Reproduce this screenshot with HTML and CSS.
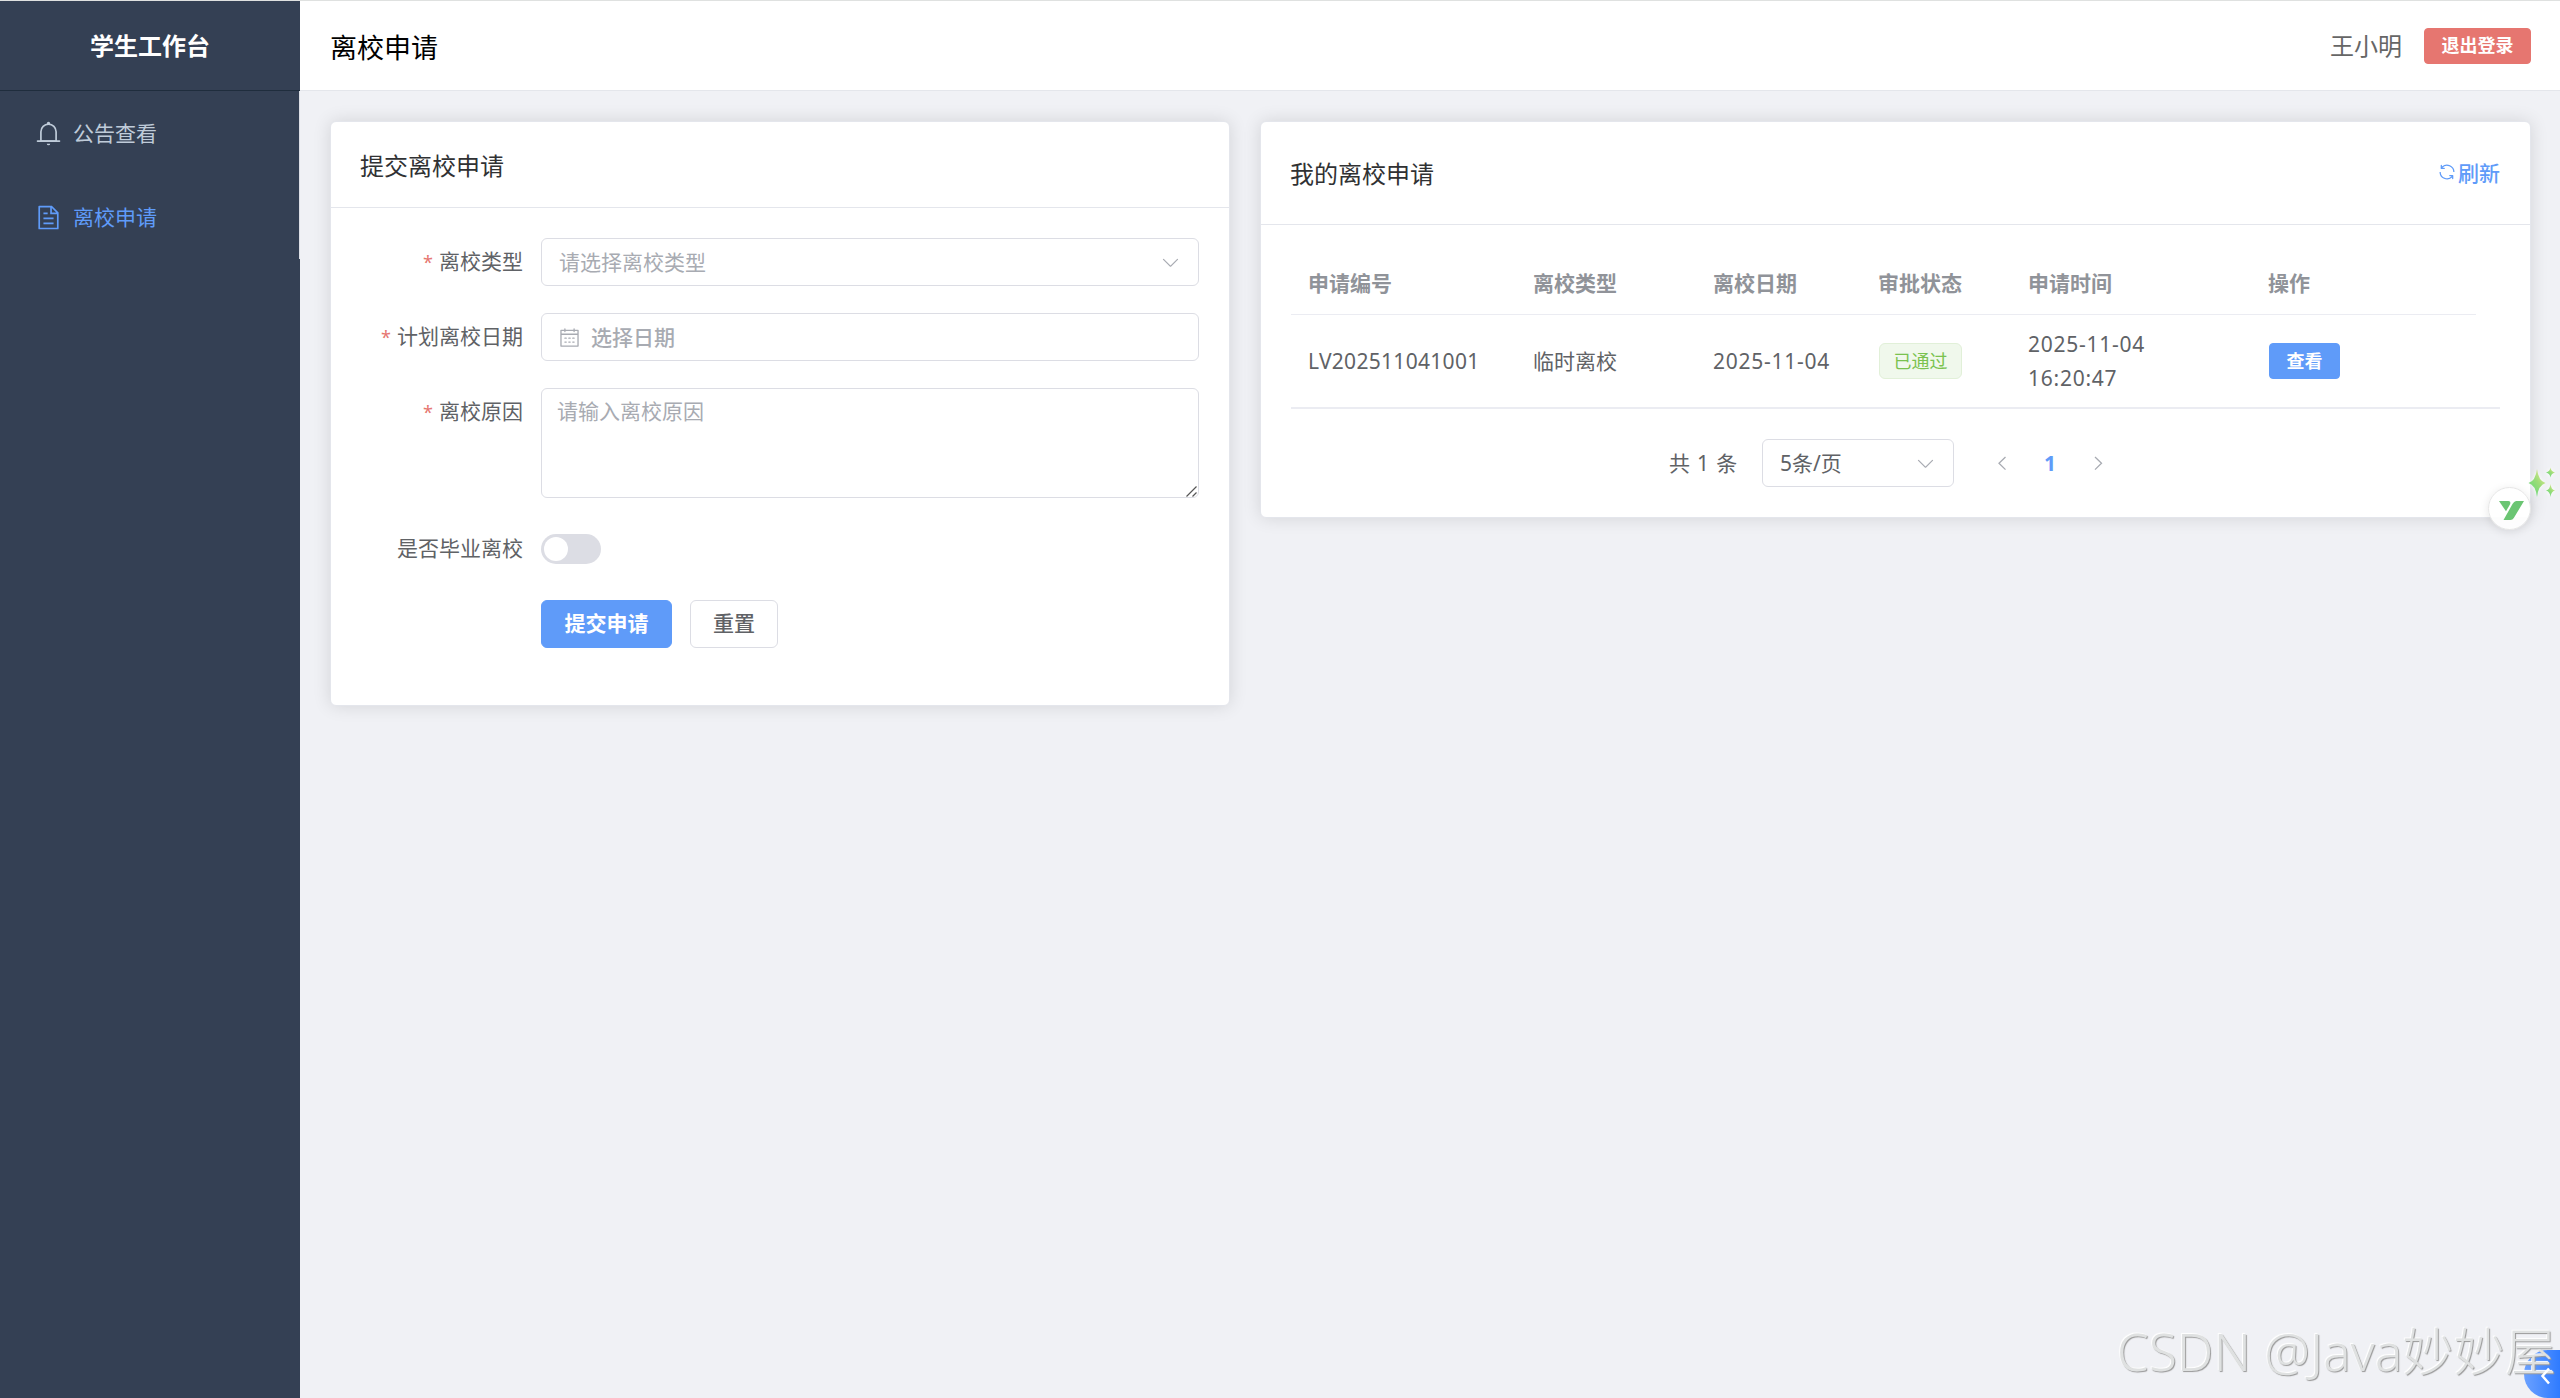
FILE: index.html
```html
<!DOCTYPE html>
<html lang="zh-CN">

<head>
    <meta charset="UTF-8">
    <title>学生工作台</title>
    <link rel="stylesheet" href="styles.css">
</head>

<body>
    <div class="layout">
        <div class="aside">
            <div class="logo">学生工作台</div>
            <ul class="menu">
                <li>
                    <span class="menu-icon"><svg viewBox="0 0 1024 1024"><path d="M512 64a64 64 0 0 1 64 64v64H448v-64a64 64 0 0 1 64-64z"/><path d="M256 768h512V448a256 256 0 1 0-512 0v320zm256-640a320 320 0 0 1 320 320v384H192V448a320 320 0 0 1 320-320z"/><path d="M96 768h832q32 0 32 32t-32 32H96q-32 0-32-32t32-32zm352 128h128a64 64 0 0 1-128 0z"/></svg></span>
                    <span class="menu-text">公告查看</span>
                </li>
                <li class="active">
                    <span class="menu-icon"><svg viewBox="0 0 1024 1024"><path d="M832 384H576V128H192v768h640V384zm-26.496-64L640 154.496V320h165.504zM160 64h480l256 256v608a32 32 0 0 1-32 32H160a32 32 0 0 1-32-32V96a32 32 0 0 1 32-32zm160 448h384v64H320v-64zm0-192h160v64H320v-64zm0 384h384v64H320v-64z"/></svg></span>
                    <span class="menu-text">离校申请</span>
                </li>
            </ul>
        </div>
        <div class="container">
            <div class="header">
                <div class="title">离校申请</div>
                <div class="user">
                    <span class="name">王小明</span>
                    <button class="btn btn-danger btn-small">退出登录</button>
                </div>
            </div>
            <div class="main">
                <!-- 提交表单 -->
                <div class="card form-card">
                    <div class="card-header">提交离校申请</div>
                    <form class="form">
                        <div class="form-item">
                            <label class="required">离校类型</label>
                            <div class="input select">
                                <span class="placeholder">请选择离校类型</span>
                                <svg class="icon" viewBox="0 0 1024 1024"><path d="M831.872 340.864 512 652.672 192.128 340.864a30.592 30.592 0 0 0-42.752 0 29.12 29.12 0 0 0 0 41.6L489.664 714.24a32 32 0 0 0 44.672 0l340.288-331.712a29.12 29.12 0 0 0 0-41.728 30.592 30.592 0 0 0-42.752 0z"/></svg>
                            </div>
                        </div>
                        <div class="form-item">
                            <label class="required">计划离校日期</label>
                            <div class="input date">
                                <svg class="icon" viewBox="0 0 1024 1024"><path d="M128 384v512h768V192H768v32a32 32 0 1 1-64 0v-32H320v32a32 32 0 0 1-64 0v-32H128v128h768v64H128zm192-256h384V96a32 32 0 1 1 64 0v32h160a32 32 0 0 1 32 32v768a32 32 0 0 1-32 32H96a32 32 0 0 1-32-32V160a32 32 0 0 1 32-32h160V96a32 32 0 0 1 64 0v32zm-32 384h64a32 32 0 0 1 0 64h-64a32 32 0 0 1 0-64zm0 192h64a32 32 0 1 1 0 64h-64a32 32 0 1 1 0-64zm192-192h64a32 32 0 0 1 0 64h-64a32 32 0 0 1 0-64zm0 192h64a32 32 0 1 1 0 64h-64a32 32 0 1 1 0-64zm192-192h64a32 32 0 1 1 0 64h-64a32 32 0 1 1 0-64zm0 192h64a32 32 0 1 1 0 64h-64a32 32 0 1 1 0-64z"/></svg>
                                <span class="placeholder">选择日期</span>
                            </div>
                        </div>
                        <div class="form-item">
                            <label class="required">离校原因</label>
                            <div class="textarea-box">
                                <textarea class="textarea" placeholder="请输入离校原因"></textarea>
                                <svg class="grip" viewBox="0 0 11 11"><path d="M0.5 10.5L10.5 0.5M6.5 10.5L10.5 6.5"/></svg>
                            </div>
                        </div>
                        <div class="form-item switch-item">
                            <label>是否毕业离校</label>
                            <span class="switch"></span>
                        </div>
                        <div class="form-item form-buttons">
                            <button type="button" class="btn btn-primary">提交申请</button>
                            <button type="button" class="btn">重置</button>
                        </div>
                    </form>
                </div>

                <!-- 申请列表 -->
                <div class="card list-card">
                    <div class="card-header">
                        <span>我的离校申请</span>
                        <a class="refresh"><svg viewBox="0 0 1024 1024"><path d="M771.776 794.88A384 384 0 0 1 128 512h64a320 320 0 0 0 555.712 216.448H654.72a32 32 0 1 1 0-64h149.056a32 32 0 0 1 32 32v148.928a32 32 0 1 1-64 0v-50.56zM276.288 295.616h92.992a32 32 0 0 1 0 64H220.16a32 32 0 0 1-32-32V178.56a32 32 0 0 1 64 0v50.56A384 384 0 0 1 896.128 512h-64a320 320 0 0 0-555.776-216.384z"/></svg>刷新</a>
                    </div>
                    <div class="table-wrap">
                        <table class="table">
                            <colgroup>
                                <col class="col-no">
                                <col class="col-type">
                                <col class="col-date">
                                <col class="col-status">
                                <col class="col-time">
                                <col class="col-action">
                            </colgroup>
                            <thead>
                                <tr>
                                    <th>申请编号</th>
                                    <th>离校类型</th>
                                    <th>离校日期</th>
                                    <th>审批状态</th>
                                    <th>申请时间</th>
                                    <th>操作</th>
                                </tr>
                            </thead>
                            <tbody>
                                <tr>
                                    <td class="no">LV202511041001</td>
                                    <td>临时离校</td>
                                    <td class="num">2025-11-04</td>
                                    <td><span class="tag">已通过</span></td>
                                    <td class="num">2025-11-04<br>16:20:47</td>
                                    <td><button class="btn btn-primary btn-small">查看</button></td>
                                </tr>
                            </tbody>
                        </table>
                    </div>
                    <div class="pagination">
                        <span class="total">共 1 条</span>
                        <div class="input select page-size">
                            <span>5条/页</span>
                            <svg class="icon" viewBox="0 0 1024 1024"><path d="M831.872 340.864 512 652.672 192.128 340.864a30.592 30.592 0 0 0-42.752 0 29.12 29.12 0 0 0 0 41.6L489.664 714.24a32 32 0 0 0 44.672 0l340.288-331.712a29.12 29.12 0 0 0 0-41.728 30.592 30.592 0 0 0-42.752 0z"/></svg>
                        </div>
                        <div class="pager">
                            <span><svg viewBox="0 0 18 18"><path d="M12.5 3L6 9.3L12.5 15.6"/></svg></span>
                            <span class="on">1</span>
                            <span><svg viewBox="0 0 18 18"><path d="M6 3L12.5 9.3L6 15.6"/></svg></span>
                        </div>
                    </div>
                </div>
            </div>
        </div>
    </div>

    <!-- 右侧悬浮 -->
    <div class="float-ball">
        <svg viewBox="0 0 25 19"><path d="M0 0H9.5Q12 .3 11.2 3L7 10.3Z"/><path d="M17 0H25L14.8 17Q13.6 19 11.5 19H4.5L13.5 3Q15 .3 17 0Z"/></svg>
    </div>
    <svg class="sparkles" viewBox="0 0 30 34">
        <defs>
            <linearGradient id="spark" x1="1" y1="0" x2="0.2" y2="1">
                <stop offset="0" stop-color="#fbe9a0"/>
                <stop offset="0.5" stop-color="#9ddd78"/>
                <stop offset="1" stop-color="#62d67c"/>
            </linearGradient>
        </defs>
        <path d="M9 3Q10.500 15 17.500 17Q10.500 19 9 31Q7.500 19 .5 17Q7.500 15 9 3Z"/>
        <path d="M22.500 1.500Q23 5.500 27 6.500Q23 7.500 22.500 11.500Q22 7.500 18 6.500Q22 5.500 22.500 1.500Z"/>
        <path d="M22.500 18Q23 23.500 27 24.500Q23 25.500 22.500 31Q22 25.500 18 24.500Q22 23.500 22.500 18Z"/>
    </svg>
    <div class="side-tab"></div>
    <div class="watermark">CSDN @Java妙妙屋</div>
    <svg class="side-arrow" viewBox="0 0 12 18"><path d="M9 1.500L2.500 9L9 16.500"/></svg>
</body>

</html>
```
FILE: styles.css
```css
* {
    margin: 0;
    padding: 0;
    box-sizing: border-box;
}

html {
    height: 1398px;
    overflow: hidden;
}

body {
    position: relative;
    height: 1398px;
    font-family: "Noto Sans", "Noto Sans CJK SC", sans-serif;
    font-size: 21px;
    color: #606266;
    background-color: #f0f1f5;
    overflow: hidden;
}

svg {
    display: block;
    fill: currentColor;
}

.layout {
    display: flex;
    height: 1398px;
    border-top: 1px solid #dfe1e0;
}

/* 侧边栏 */
.aside {
    width: 300px;
    background-color: #344054;
}

.logo {
    height: 90px;
    line-height: 90px;
    border-bottom: 1px solid #1f2d3d;
    text-align: center;
    font-size: 24px;
    font-weight: bold;
    color: #fff;
}

.menu {
    list-style: none;
    border-right: 1px solid #dcdfe6;
}

.menu li {
    display: flex;
    align-items: center;
    height: 84px;
    padding-left: 30px;
    color: #bfcbd9;
}

.menu .active {
    color: #5f9bf9;
}

.menu-icon {
    width: 36px;
    margin-right: 7px;
}

.menu-icon svg {
    width: 27px;
    height: 27px;
    margin: 0 auto;
}

.menu-text {
    padding-bottom: 2px;
}

/* 顶部 */
.container {
    flex: 1;
}

.header {
    display: flex;
    justify-content: space-between;
    align-items: center;
    height: 90px;
    padding: 0 29px 0 30px;
    background-color: #fff;
    border-bottom: 1px solid #e4e6eb;
}

.title {
    font-size: 27px;
    line-height: 40px;
    padding-top: 4px;
    color: #000;
}

.user {
    display: flex;
    align-items: center;
    gap: 22px;
}

.name {
    padding-top: 1px;
    font-size: 24px;
    line-height: 36px;
    color: #666;
}

/* 按钮 */
.btn {
    height: 48px;
    padding: 0 22px 2px;
    border: 1px solid #dcdde4;
    border-radius: 6px;
    background-color: #fff;
    color: #606266;
    font-family: inherit;
    font-size: 21px;
    font-weight: 500;
    line-height: 30px;
}

.btn-primary {
    padding: 0 22.5px 2px;
    border-color: #5f9bf9;
    background-color: #5f9bf9;
    color: #fff;
    font-weight: bold;
}

.btn-danger {
    border-color: #e67670;
    background-color: #e67670;
    color: #fff;
    font-weight: bold;
}

.btn-small {
    display: block;
    height: 36px;
    padding: 0 16.5px 1px;
    border-radius: 4px;
    font-size: 18px;
}

.main {
    display: flex;
    align-items: flex-start;
    gap: 30px;
    padding: 30px 29px 30px 30px;
}

.card {
    border: 1px solid #e4e6ec;
    border-radius: 6px;
    background-color: #fff;
    box-shadow: 0 0 18px rgba(0, 0, 0, 0.12);
}

.form-card {
    width: 900px;
    height: 585px;
}

.list-card {
    flex: 1;
    height: 397px;
}

.card-header {
    display: flex;
    justify-content: space-between;
    align-items: center;
    height: 86px;
    padding: 0 30px 1px 29px;
    border-bottom: 1px solid #e4e6ec;
    font-size: 24px;
    color: #303133;
}

.list-card .card-header {
    height: 103px;
}

.refresh {
    display: flex;
    align-items: center;
    gap: 1px;
    padding-bottom: 2px;
    font-size: 21px;
    font-weight: 500;
    color: #5f9bf9;
}

.refresh svg {
    width: 20px;
    height: 20px;
}

/* 表单 */
.form {
    display: flex;
    flex-direction: column;
    gap: 27px;
    padding: 30px;
}

.form-item {
    display: flex;
}

.form-item label {
    width: 180px;
    height: 48px;
    padding-right: 18px;
    line-height: 46px;
    text-align: right;
}

.required::before {
    content: "*";
    margin-right: 6px;
    color: #e67670;
    font-size: 18px;
}

.input {
    display: flex;
    flex: 1;
    align-items: center;
    height: 48px;
    padding: 0 17px;
    border: 1px solid #dcdde4;
    border-radius: 6px;
    background-color: #fff;
}

.input span {
    padding-bottom: 2px;
}

.select {
    justify-content: space-between;
}

.date {
    gap: 11px;
}

.icon {
    width: 21px;
    height: 21px;
    color: #a8abb2;
}

.placeholder {
    color: #a8abb2;
}

.date .placeholder {
    font-weight: 500;
}

.textarea-box {
    position: relative;
    flex: 1;
    height: 110px;
}

.textarea {
    display: block;
    width: 100%;
    height: 110px;
    padding: 6px 15px;
    border: 1px solid #dcdde4;
    border-radius: 6px;
    font-family: inherit;
    font-size: 21px;
    line-height: 32px;
    resize: none;
}

.textarea::placeholder {
    color: #a8abb2;
}

.grip {
    position: absolute;
    right: 2px;
    bottom: 1px;
    width: 11px;
    height: 11px;
    fill: none;
    stroke: #555;
    stroke-width: 1.2;
}

.switch-item {
    align-items: center;
    height: 48px;
}

.switch {
    width: 60px;
    height: 30px;
    padding: 3px;
    border-radius: 15px;
    background-color: #dcdde4;
}

.switch::before {
    content: "";
    display: block;
    width: 24px;
    height: 24px;
    border-radius: 50%;
    background-color: #fff;
}

.form-buttons {
    gap: 18px;
    padding-left: 180px;
}

/* 表格 */
.table-wrap {
    height: 154px;
    margin: 30px 30px 0 30px;
    border-bottom: 1px solid #ebecf2;
    box-shadow: inset 0 -1px #ebecf2;
}

.table {
    width: 1185px;
    table-layout: fixed;
    border-collapse: separate;
    border-spacing: 0;
    line-height: 34px;
}

.col-no { width: 225px; }
.col-type { width: 180px; }
.col-date { width: 165px; }
.col-status { width: 150px; }
.col-time { width: 240px; }
.col-action { width: 225px; }

.table th,
.table td {
    padding: 0 18px 0 17px;
    text-align: left;
    white-space: nowrap;
}

.table th {
    height: 60px;
    padding-bottom: 3px;
    border-bottom: 1px solid #ebecf2;
    color: #909399;
}

.table td {
    height: 92px;
}

.no {
    letter-spacing: 0.3px;
}

.num {
    letter-spacing: 0.75px;
}

.tag {
    display: block;
    width: 83px;
    height: 36px;
    margin-left: 1px;
    border: 1px solid #e1f0d8;
    border-radius: 6px;
    background-color: #f0f8ec;
    color: #7ac24f;
    font-size: 18px;
    line-height: 34px;
    text-align: center;
}

.table .btn {
    margin-left: 1px;
}

/* 分页 */
.pagination {
    display: flex;
    align-items: center;
    justify-content: center;
    height: 48px;
    margin-top: 30px;
}

.total {
    padding-bottom: 2px;
    letter-spacing: 0.8px;
}

.page-size {
    flex: none;
    width: 192px;
    margin: 0 24px;
}

.pager {
    display: flex;
}

.pager span {
    display: flex;
    align-items: center;
    justify-content: center;
    width: 48px;
    height: 48px;
    color: #a8abb2;
}

.pager svg {
    width: 18px;
    height: 18px;
    fill: none;
    stroke: currentColor;
    stroke-width: 1.3;
}

.pager .on {
    padding-bottom: 1px;
    font-weight: bold;
    color: #5f9bf9;
}

/* 悬浮元素 */
.float-ball {
    position: absolute;
    left: 2488px;
    top: 487px;
    width: 43px;
    height: 43px;
    padding: 13px 0 0 10px;
    border: 1px solid #e6e6e6;
    border-radius: 50%;
    background-color: rgba(255, 255, 255, 0.9);
    box-shadow: 0 2px 10px rgba(0, 0, 0, 0.1);
    color: #6bc573;
}

.float-ball svg {
    width: 25px;
    height: 19px;
}

.sparkles {
    position: absolute;
    left: 2528px;
    top: 466px;
    width: 30px;
    height: 34px;
    fill: url(#spark);
    filter: drop-shadow(0 0 2px #fff);
}

.side-tab {
    position: absolute;
    right: 0;
    top: 1350px;
    width: 36px;
    height: 48px;
    border-radius: 24px 0 0 24px;
    background: linear-gradient(90deg, #6ba1ff, #2f7bff);
}

.watermark {
    position: absolute;
    left: 2117px;
    top: 1314px;
    color: #dfe1e1;
    font-size: 51px;
    line-height: 74px;
    font-weight: 300;
    letter-spacing: 0.25px;
    white-space: nowrap;
    text-shadow: 1px 1px 1px #999, -1px -1px 1px #fff;
}

.side-arrow {
    position: absolute;
    left: 2540px;
    top: 1367px;
    width: 12px;
    height: 18px;
    fill: none;
    stroke: #fff;
    stroke-width: 2.5;
}
```
